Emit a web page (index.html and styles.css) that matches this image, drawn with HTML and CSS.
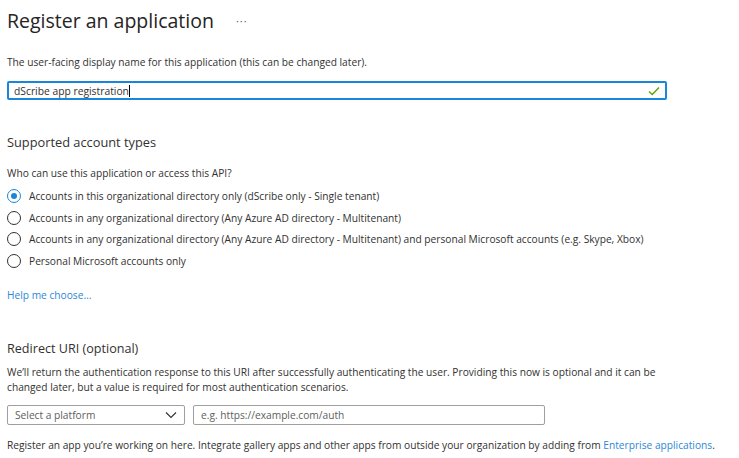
FILE: index.html
```html
<!DOCTYPE html>
<html lang="en">
<head>
<meta charset="utf-8">
<title>Register an application</title>
<link rel="stylesheet" href="styles.css">
</head>
<body>
<div class="page">
  <header class="title-row">
    <h1 class="title">Register an application</h1>
    <span class="more">&middot;&middot;&middot;</span>
  </header>

  <p class="desc">The user-facing display name for this application (this can be changed later).</p>
  <div class="name-input">
    <span class="value">dScribe app registration</span><span class="caret"></span>
    <svg class="check" width="12" height="10" viewBox="0 0 12 10"><path d="M1 5.5 L4.2 8.5 L11 1.5" fill="none" stroke="#57a300" stroke-width="1.3"/></svg>
  </div>

  <h2 class="section">Supported account types</h2>
  <p class="question">Who can use this application or access this API?</p>
  <div class="radios">
    <label class="radio checked"><span class="dot"></span>Accounts in this organizational directory only (dScribe only - Single tenant)</label>
    <label class="radio"><span class="dot"></span>Accounts in any organizational directory (Any Azure AD directory - Multitenant)</label>
    <label class="radio"><span class="dot"></span>Accounts in any organizational directory (Any Azure AD directory - Multitenant) and personal Microsoft accounts (e.g. Skype, Xbox)</label>
    <label class="radio"><span class="dot"></span>Personal Microsoft accounts only</label>
  </div>
  <a class="link help">Help me choose...</a>

  <h2 class="section redirect">Redirect URI (optional)</h2>
  <p class="para">We’ll return the authentication response to this URI after successfully authenticating the user. Providing this now is optional and it can be changed later, but a value is required for most authentication scenarios.</p>
  <div class="uri-row">
    <div class="select">
      <span>Select a platform</span>
      <svg width="12" height="8" viewBox="0 0 12 8"><path d="M1 1.5 L6 6.5 L11 1.5" fill="none" stroke="#323130" stroke-width="1.1"/></svg>
    </div>
    <div class="uri">e.g. https://example.com/auth</div>
  </div>
  <p class="footer">Register an app you’re working on here. Integrate gallery apps and other apps from outside your organization by adding from <a class="link">Enterprise applications</a>.</p>
</div>
</body>
</html>
```

FILE: styles.css
```css
* { box-sizing: border-box; }
html, body { margin: 0; padding: 0; background: #fff; }
body {
  font-family: "Open Sans", "Noto Sans", sans-serif;
  color: #323130;
  font-size: 10.2px;
}
.page {
  padding: 8px 0 0 7px;
  width: 739px;
}
.title-row {
  display: flex;
  align-items: center;
  gap: 22px;
  height: 26px;
}
.title {
  margin: 0;
  font-size: 19.5px;
  font-weight: 400;
  line-height: 26px;
  color: #252423;
}
.more {
  font-size: 11px;
  color: #605e5c;
  letter-spacing: 1px;
  margin-top: -2px;
}
.desc {
  margin: 21px 0 0;
  line-height: 14px;
}
.name-input {
  margin-top: 12px;
  width: 660px;
  height: 19px;
  border: 2px solid #1a86d9;
  border-radius: 2px;
  display: flex;
  align-items: center;
  padding: 0 0 0 5px;
  position: relative;
}
.name-input .value { font-size: 10.3px; }
.caret {
  display: inline-block;
  width: 1px;
  height: 12px;
  background: #000;
}
.check { margin-left: auto; margin-right: 5px; }
.section {
  margin: 33px 0 0;
  font-size: 12.8px;
  font-weight: 400;
  line-height: 18px;
}
.question {
  margin: 15px 0 0;
  line-height: 14px;
}
.radios {
  margin-top: 9px;
  display: flex;
  flex-direction: column;
  gap: 7.5px;
}
.radio {
  display: flex;
  align-items: center;
  gap: 8px;
  height: 14px;
  line-height: 14px;
}
.dot {
  width: 14px;
  height: 14px;
  border: 1px solid #323130;
  border-radius: 50%;
  display: flex;
  align-items: center;
  justify-content: center;
  flex: none;
}
.checked .dot { border-color: #1a86d9; }
.checked .dot::after {
  content: "";
  width: 6px;
  height: 6px;
  border-radius: 50%;
  background: #1a86d9;
}
.link { color: #2b88d8; }
.help {
  display: block;
  margin-top: 20px;
  line-height: 14px;
}
.redirect { margin-top: 38px; font-size: 12.6px; }
.para {
  margin: 7px 0 0;
  width: 660px;
  line-height: 15px;
}
.uri-row {
  margin-top: 10px;
  display: flex;
  gap: 8px;
}
.select, .uri {
  height: 20px;
  border: 1px solid #a19f9d;
  border-radius: 2px;
  display: flex;
  align-items: center;
  padding: 0 7px;
  color: #605e5c;
}
.select { width: 178px; justify-content: space-between; }
.uri { width: 352px; }
.footer {
  margin: 13px 0 0;
  line-height: 14px;
}
```
